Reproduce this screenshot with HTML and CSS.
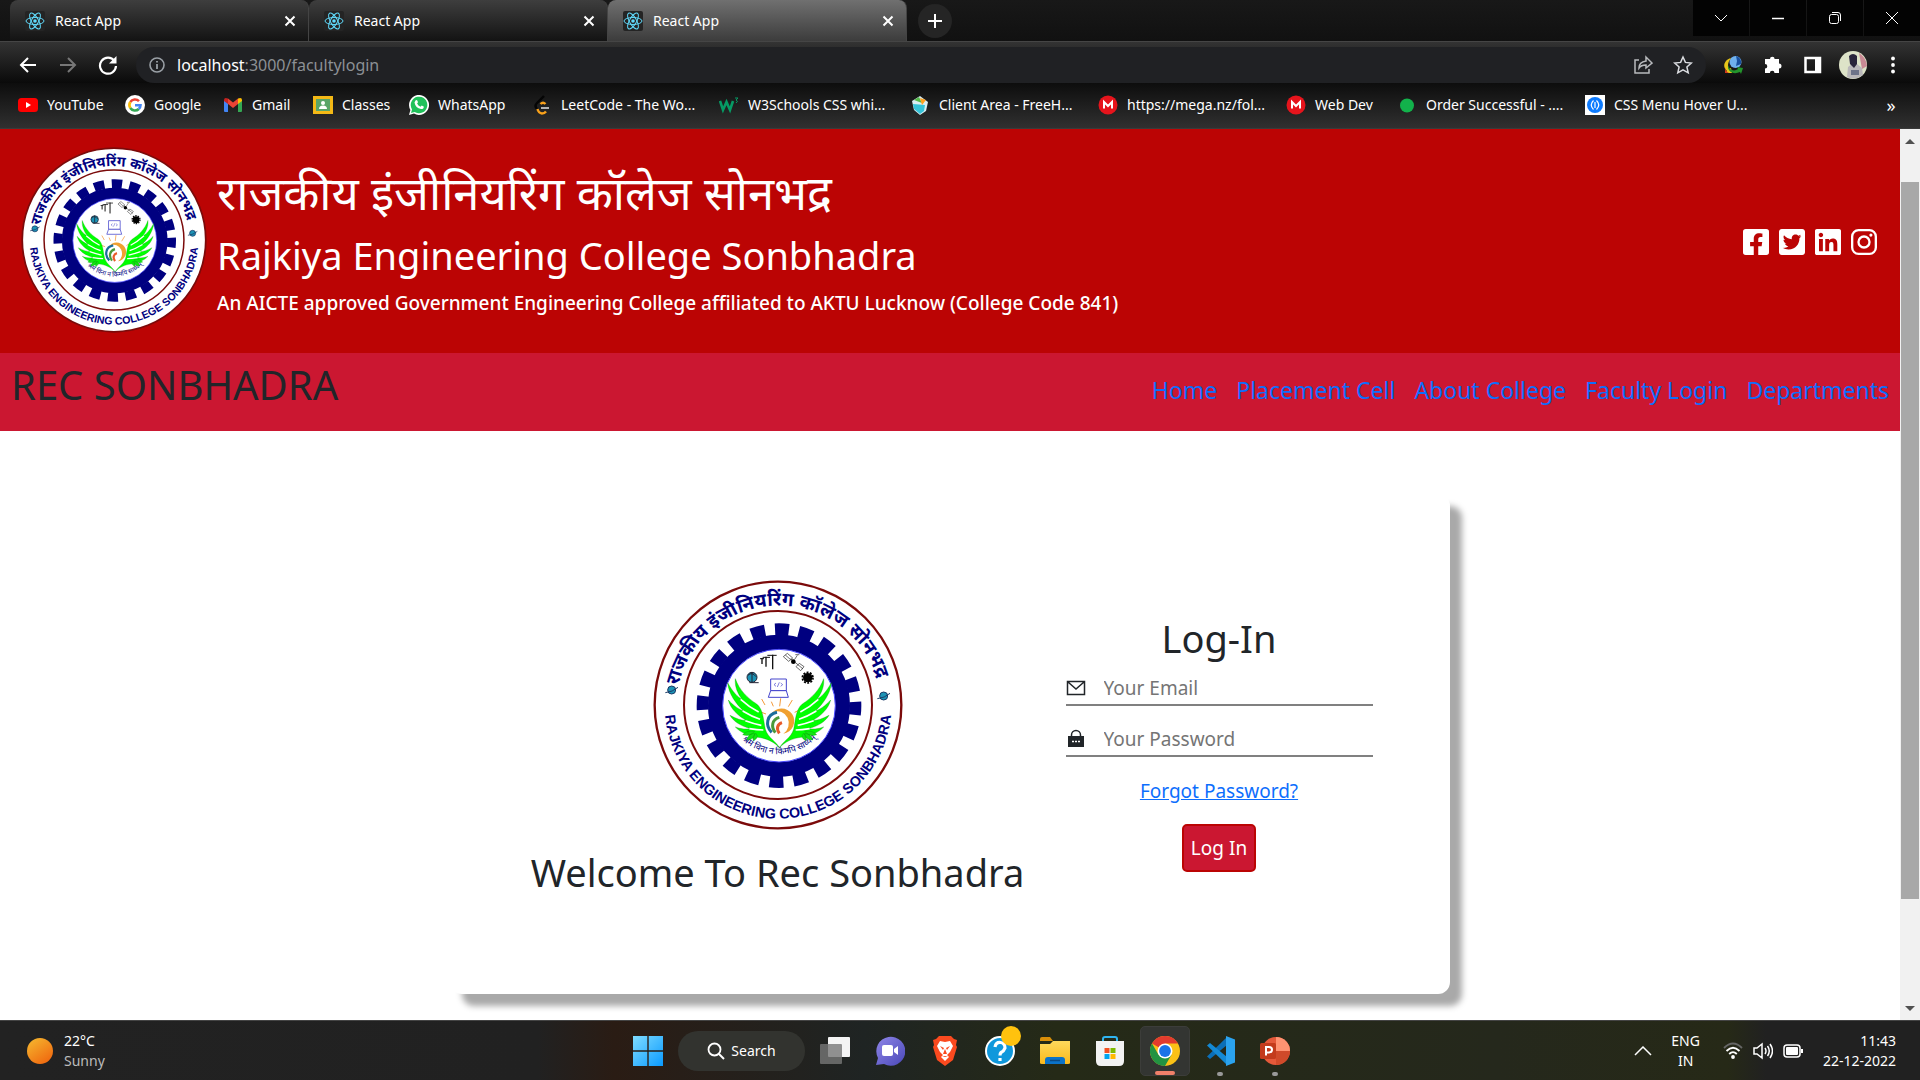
FILE: index.html
```html
<!DOCTYPE html>
<html lang="en">
<head>
<meta charset="utf-8">
<title>React App</title>
<link rel="stylesheet" href="styles.css">
</head>
<body>
<svg class="defs" aria-hidden="true">
  <defs>
    <path id="arc-top" d="M76 409a308 308 0 0 1 616 -20"/>
    <path id="arc-bottom" d="M45 345a340 340 0 1 0 674 0"/>
    <path id="arc-motto" d="M248 462a160 160 0 0 0 274 -6"/>
    <path id="wing" d="M386 517C372 500 345 488 322 486C292 482 268 470 254 455C272 462 290 462 300 460C270 452 248 438 238 420C256 430 274 436 288 436C260 420 240 400 233 374C250 392 264 402 280 408C256 386 234 356 231 322C246 350 262 366 274 372C258 350 252 330 254 310C266 344 290 368 318 386C338 402 338 434 344 462C352 488 376 498 386 517Z"/>
    <path id="feathers" d="M296 460Q320 464 338 464M284 436Q312 446 332 450M276 407Q304 424 328 432M270 372Q296 396 324 410"/>
    <symbol id="crest" viewBox="7 14 750 750">
      <circle cx="382" cy="389" r="370" fill="#fff" stroke="#7b0a0a" stroke-width="7"/>
      <circle cx="382" cy="389" r="282" fill="none" stroke="#7b0a0a" stroke-width="6"/>
      <circle cx="385" cy="391" r="190" fill="none" stroke="#000080" stroke-width="46"/>
      <circle cx="385" cy="391" r="229" fill="none" stroke="#000080" stroke-width="36" stroke-dasharray="42 29.95" stroke-dashoffset="14"/>
      <circle cx="385" cy="391" r="169" fill="#fff" stroke="#4a4aff" stroke-width="3"/>
      <text class="crest-hi"><textPath href="#arc-top" startOffset="50%">राजकीय इंजीनियरिंग कॉलेज सोनभद्र</textPath></text>
      <text class="crest-en"><textPath href="#arc-bottom" startOffset="50%">RAJKIYA ENGINEERING COLLEGE SONBHADRA</textPath></text>
      <text class="crest-motto"><textPath href="#arc-motto" startOffset="50%">श्रमं विना न किमपि साध्यम्</textPath></text>
      <g fill="#1c93b5" stroke="#1b3a66" stroke-width="3"><circle cx="63" cy="344" r="12"/><path d="M44 352Q66 350 82 336" fill="none"/><circle cx="699" cy="362" r="12"/><path d="M680 370Q702 368 718 354" fill="none"/></g>
      <g fill="none" stroke="#111" stroke-width="4"><path d="M366 238v44M346 244v30M334 248v18" /><path d="M350 240h28M336 246h22M328 250h12" stroke-width="3"/></g>
      <g fill="none" stroke="#222" stroke-width="2"><path d="M398 244l12-10 16 14-12 10zM436 274l10-10 14 10-10 12zM420 250l24 20M440 240l-8 12M434 238h12M404 239l16 14M443 269l14 12"/></g><circle cx="428" cy="259" r="7"/>
      <circle cx="471" cy="307" r="14"/><circle cx="471" cy="307" r="16" fill="none" stroke="#000" stroke-width="5" stroke-dasharray="6 4"/>
      <circle cx="304" cy="306" r="15" fill="#1c93b5" stroke="#223" stroke-width="3"/><path d="M292 300q12-12 24 4M304 290v30M296 322h28" fill="none" stroke="#223" stroke-width="3"/>
      <g fill="#fff" stroke="#4444cc" stroke-width="3"><path d="M360 311h47v35h-47z"/><path d="M360 346h47l6 20h-60z"/><path d="M376 323l-6 5 6 5M390 323l6 5-6 5M386 321l-6 14" fill="none" stroke-width="2"/></g>
      <g fill="none" stroke="#f49a3a" stroke-width="3"><path d="M333 371l10 18M362 379l6 14M390 369l-3 24M425 374l-12 20M330 410l16 6M432 411l16-8"/></g>
      <circle cx="392" cy="440" r="37" fill="#fff"/>
      <path d="M360 418a38 38 0 1 1 38 57a33 36 0 0 0-30-64z" fill="#f0a030"/>
      <g fill="none" stroke-width="9"><path d="M379 411c-32 6-36 40-16 60" stroke="#1b6c9c"/><path d="M386 426c-22 6-26 28-12 46" stroke="#4a9a3a"/><path d="M394 442c-14 4-18 18-8 32" stroke="#e85a2a"/></g>
      <use href="#wing" fill="#0f0" stroke="#0a8a0a" stroke-width="1"/>
      <use href="#wing" fill="#0f0" stroke="#0a8a0a" stroke-width="1" transform="matrix(-1 0 0 1 773 0)"/>
      <use href="#feathers" fill="none" stroke="#fff" stroke-width="5"/>
      <use href="#feathers" fill="none" stroke="#fff" stroke-width="5" transform="matrix(-1 0 0 1 773 0)"/>
      <g fill="#12e612" stroke="#0a8a0a"><path d="M276 478q12-14 36-10q-16 18-36 10zM288 494q4-18 24-20q0 20-24 20zM308 496q-4-14 8-22q10 14-8 22zM498 478q-12-14-36-10q16 18 36 10zM486 494q-4-18-24-20q0 20 24 20zM466 496q4-14-8-22q-10 14 8 22z"/></g>
    </symbol>
    <symbol id="react" viewBox="0 0 20 20"><rect width="20" height="20" rx="2" fill="#242424"/><g fill="none" stroke="#61dafb"><ellipse cx="10" cy="10" rx="9" ry="3.5"/><ellipse cx="10" cy="10" rx="9" ry="3.5" transform="rotate(60 10 10)"/><ellipse cx="10" cy="10" rx="9" ry="3.5" transform="rotate(120 10 10)"/></g><circle cx="10" cy="10" r="1.8" fill="#61dafb"/></symbol>
    <symbol id="close" viewBox="0 0 12 12"><path d="M1.500 1.500l9 9M10.500 1.500l-9 9" stroke="#fff" stroke-width="2" fill="none"/></symbol>
    <symbol id="mega" viewBox="0 0 20 20"><circle cx="10" cy="10" r="9.500" fill="#e6141c"/><path d="M6 13.500V7l4 4 4-4v6.500" fill="none" stroke="#fff" stroke-width="2"/></symbol>
    <linearGradient id="sun" x1="0" y1="0" x2=".7" y2="1"><stop stop-color="#f5bb30"/><stop offset="1" stop-color="#f06a10"/></linearGradient>
    <linearGradient id="win" x1="0" y1="0" x2="1" y2="1"><stop stop-color="#7fdcff"/><stop offset="1" stop-color="#0a9aff"/></linearGradient>
    <linearGradient id="chat" x1="0" y1="0" x2="1" y2="1"><stop stop-color="#8f86e8"/><stop offset="1" stop-color="#4a48b8"/></linearGradient>
    <linearGradient id="fold" x1="0" y1="0" x2="0" y2="1"><stop stop-color="#ffd95c"/><stop offset="1" stop-color="#fbb91c"/></linearGradient>
  </defs>
</svg>

<div class="chrome">
  <div class="tabstrip">
    <div class="tab"><svg class="fav"><use href="#react"/></svg><span>React App</span><button class="plain" aria-label="Close tab"><svg class="x"><use href="#close"/></svg></button></div>
    <div class="tab"><svg class="fav"><use href="#react"/></svg><span>React App</span><button class="plain" aria-label="Close tab"><svg class="x"><use href="#close"/></svg></button></div>
    <div class="tab active"><svg class="fav"><use href="#react"/></svg><span>React App</span><button class="plain" aria-label="Close tab"><svg class="x"><use href="#close"/></svg></button></div>
    <button class="newtab" aria-label="New tab"><svg width="16" height="16" viewBox="0 0 16 16"><path d="M8 1v14M1 8h14" stroke="#fff" stroke-width="2"/></svg></button>
    <div class="wincontrols">
      <button aria-label="Search tabs"><svg viewBox="0 0 14 14"><path d="M1 4l6 6 6-6"/></svg></button>
      <button aria-label="Minimize"><svg viewBox="0 0 14 14"><path d="M1 7.500h12" stroke-width="1.500"/></svg></button>
      <button aria-label="Restore"><svg viewBox="0 0 14 14"><rect x="1.500" y="3.500" width="9" height="9" rx="2"/><path d="M4 1.500h6q2.500 0 2.500 2.500v6"/></svg></button>
      <button aria-label="Close"><svg viewBox="0 0 14 14"><path d="M1 1l12 12M13 1L1 13"/></svg></button>
    </div>
  </div>
  <div class="toolbar">
    <button class="tool" aria-label="Back"><svg viewBox="0 0 20 20"><path d="M18 10H3M10 3l-7 7 7 7" fill="none" stroke="#fff" stroke-width="2"/></svg></button>
    <button class="tool" aria-label="Forward"><svg viewBox="0 0 20 20"><path d="M2 10h15M10 3l7 7-7 7" fill="none" stroke="#777" stroke-width="2"/></svg></button>
    <button class="tool" aria-label="Reload"><svg viewBox="0 0 20 20"><path d="M16.500 6A8 8 0 1 0 18 11" fill="none" stroke="#fff" stroke-width="2.200"/><path d="M18.500 1v7.500H11z" fill="#fff"/></svg></button>
    <div class="omnibox">
      <svg width="16" height="16" viewBox="0 0 16 16"><circle cx="8" cy="8" r="7" fill="none" stroke="#9aa0a6" stroke-width="1.600"/><path d="M8 7v5M8 4v1.600" stroke="#9aa0a6" stroke-width="1.800"/></svg>
      <div class="url">localhost<span>:3000/facultylogin</span></div>
      <button class="tool" aria-label="Share"><svg viewBox="0 0 20 20"><path d="M6 5H2v13h14v-4M6 13q0-6 7-7V2l6 6-6 5v-3q-5 0-7 3z" fill="none" stroke="#b8babd" stroke-width="1.500"/></svg></button>
      <button class="tool" aria-label="Bookmark"><svg viewBox="0 0 20 20"><path d="M10 2l2.400 5.400 5.900.6-4.400 4 1.300 5.800L10 14.800l-5.200 3 1.300-5.800-4.400-4 5.900-.6z" fill="none" stroke="#dadce0" stroke-width="1.500"/></svg></button>
    </div>
    <button class="tool" aria-label="Download manager"><svg viewBox="0 0 20 20"><circle cx="12.500" cy="7" r="6" fill="#6fb0ee"/><path d="M13 1q6 2 5 8l-5 2 1-5z" fill="#184f9e"/><path d="M8 3C1 5-1 12 4 16l-2 2 7 0-1-5-2 1C4 11 5 7 8 3z" fill="#e6c619"/><path d="M5 10c1 5 6 7 10 4l-1-2 6 1-2 6-1-2C11 20 4 17 5 10z" fill="#23952b"/><path d="M2 12q0 4 4 6l-4 0z" fill="#d33a20"/></svg></button>
    <button class="tool" aria-label="Extensions"><svg viewBox="0 0 20 20"><path d="M7 4a2.300 2.300 0 0 1 4.600 0h4.400v4.500a2.500 2.500 0 0 1 0 5V18h-4.500a2.300 2.300 0 0 0-4.600 0H2v-4.500a2.300 2.300 0 0 0 0-4.600V4z" fill="#fff"/></svg></button>
    <button class="tool" aria-label="Side panel"><svg viewBox="0 0 20 20"><path d="M2.500 3h14.500v14H2.500z" fill="none" stroke="#fff" stroke-width="2.500"/><path d="M12 3h5v14h-5z" fill="#fff"/></svg></button>
    <button class="tool" aria-label="Profile"><svg class="avatar" viewBox="0 0 28 28"><circle cx="14" cy="14" r="14" fill="#dde3c8"/><path d="M20 2q7 4 8 13l-5 3z" fill="#c98a95"/><path d="M8 26l1-10 4-3h5l5 4 1 7q-8 6-16 2z" fill="#b9b7ba"/><path d="M10 5q4-4 8 0v8l-3 4-4-4z" fill="#28243a"/><path d="M12 19h8v5h-8z" fill="#6d7389"/></svg></button>
    <button class="tool" aria-label="Menu"><svg viewBox="0 0 20 20" fill="#fff"><circle cx="10" cy="3.500" r="1.900"/><circle cx="10" cy="10" r="1.900"/><circle cx="10" cy="16.500" r="1.900"/></svg></button>
  </div>
  <nav class="bookmarks" aria-label="Bookmarks">
    <a href="#"><svg viewBox="0 0 20 20"><rect y="3" width="20" height="14" rx="3.500" fill="#f00"/><path d="M8 7l5 3-5 3z" fill="#fff"/></svg>YouTube</a>
    <a href="#"><svg viewBox="0 0 20 20"><circle cx="10" cy="10" r="10" fill="#fff"/><g fill="none" stroke-width="2.600"><path d="M5.300 7A5.600 5.600 0 0 1 14 6.200" stroke="#ea4335"/><path d="M5.300 13a5.600 5.600 0 0 1 0-6" stroke="#fbbc05"/><path d="M5.300 13a5.600 5.600 0 0 0 8.500 1" stroke="#34a853"/><path d="M13.800 14a5.600 5.600 0 0 0 1.700-3.800H10" stroke="#4285f4"/></g></svg>Google</a>
    <a href="#"><svg viewBox="0 0 20 20"><path d="M1 5l4 3v9H2q-1 0-1-1z" fill="#4285f4"/><path d="M19 5l-4 3v9h3q1 0 1-1z" fill="#34a853"/><path d="M5 3.500l5 4 5-4V9l-5 4-5-4z" fill="#ea4335"/><path d="M1 5q0-3 4-1.500V9L1 6z" fill="#c5221f"/><path d="M19 5q0-3-4-1.500V9l4-3z" fill="#fbbc04"/></svg>Gmail</a>
    <a href="#"><svg viewBox="0 0 20 20"><path d="M0 1h20v18H0z" fill="#f4b916"/><path d="M3 4h14v12H3z" fill="#5aa568"/><circle cx="10" cy="8" r="2" fill="#fff"/><path d="M6 14q0-3.500 4-3.500t4 3.500z" fill="#fff"/></svg>Classes</a>
    <a href="#"><svg viewBox="0 0 20 20"><path d="M0 20l1.400-5A10 10 0 1 1 5 18.600z" fill="#fff"/><path d="M2 18l1-3.600A8.300 8.300 0 1 1 5.600 17z" fill="#20c15a"/><path d="M6.500 5.500q1-1 1.800 0l.7 1.800-.9 1.200q1 2.300 3.400 3.200l1.200-1.300 2 1q.4 2.600-2.700 2.700Q6.500 13 5.500 7.500z" fill="#fff"/></svg>WhatsApp</a>
    <a href="#"><svg viewBox="0 0 20 20"><path d="M12 1L5 8q-3 3 0 6" fill="none" stroke="#050505" stroke-width="2.400"/><path d="M13.500 9q-2.500-2.500-5 0M5.500 14q1 4 4.500 4.500 2.500 0 4-2" fill="none" stroke="#f8a11b" stroke-width="2.400"/><path d="M9 13h8" stroke="#b3b3b3" stroke-width="2"/></svg>LeetCode - The Wo...</a>
    <a href="#"><svg viewBox="0 0 20 20"><path d="M1 6l3 9 3.500-8 3.500 8 3-9" fill="none" stroke="#069a64" stroke-width="2.600"/><path d="M16 3h3l-2 2q3 1 0 3" fill="none" stroke="#069a64"/></svg>W3Schools CSS whi...</a>
    <a href="#"><svg viewBox="0 0 20 20"><path d="M2 6l8-5 8 6-2 9-6 4-6-5z" fill="#d9eef2"/><path d="M3 9l12 1-1 6-4 3-6-5z" fill="#35c3d8"/><path d="M4 5l5-3 3 6z" fill="#55b94a"/><path d="M10 3l6 2-4 5z" fill="#ff9f1c"/></svg>Client Area - FreeH...</a>
    <a href="#"><svg><use href="#mega"/></svg>https://mega.nz/fol...</a>
    <a href="#"><svg><use href="#mega"/></svg>Web Dev</a>
    <a href="#"><svg viewBox="0 0 20 20"><circle cx="10" cy="10.500" r="7" fill="#12b24b"/></svg>Order Successful - ....</a>
    <a href="#"><svg viewBox="0 0 20 20"><path d="M0 0h20v20H0z" fill="#fff"/><circle cx="10" cy="10" r="8" fill="#0d7bff"/><path d="M8.500 5.500Q4 10 8.500 14.500M11.500 5.500q4.500 4.500 0 9M10 7v6" fill="none" stroke="#fff" stroke-width="1.200"/></svg>CSS Menu Hover U...</a>
    <button class="plain more" aria-label="More bookmarks">»</button>
  </nav>
</div>

<div class="viewport">
  <div class="page">
    <header class="banner">
      <svg class="banner-logo" role="img" aria-label="College crest"><use href="#crest"/></svg>
      <div class="banner-text">
        <p class="title-hi" lang="hi">राजकीय इंजीनियरिंग कॉलेज सोनभद्र</p>
        <h1 class="title-en">Rajkiya Engineering College Sonbhadra</h1>
        <p class="subtitle">An AICTE approved Government Engineering College affiliated to AKTU Lucknow (College Code 841)</p>
      </div>
      <div class="social">
        <a href="#" aria-label="Facebook"><svg viewBox="0 0 448 512"><path d="M400 32H48A48 48 0 0 0 0 80v352a48 48 0 0 0 48 48h137.250V327.690h-63V256h63v-54.640c0-62.150 37-96.480 93.670-96.480 27.140 0 55.520 4.840 55.520 4.840v61h-31.270c-30.810 0-40.420 19.120-40.420 38.730V256h68.780l-11 71.690h-57.780V480H400a48 48 0 0 0 48-48V80a48 48 0 0 0-48-48z"/></svg></a>
        <a href="#" aria-label="Twitter"><svg viewBox="0 0 448 512"><path d="M400 32H48C21.500 32 0 53.500 0 80v352c0 26.500 21.500 48 48 48h352c26.500 0 48-21.500 48-48V80c0-26.500-21.500-48-48-48zm-48.900 158.800c.2 2.800.2 5.700.2 8.500 0 86.700-66 186.600-186.600 186.600-37.200 0-71.700-10.800-100.700-29.400 5.300.6 10.400.8 15.800.8 30.700 0 58.900-10.400 81.400-28-28.800-.6-53-19.500-61.300-45.500 10.100 1.500 19.200 1.500 29.600-1.200-30-6.100-52.500-32.500-52.500-64.400v-.8c8.700 4.900 18.900 7.900 29.600 8.300a65.447 65.447 0 0 1-29.200-54.600c0-12.200 3.200-23.400 8.900-33.100 32.300 39.800 80.800 65.800 135.200 68.600-9.300-44.500 24-80.600 64-80.600 18.900 0 35.900 7.900 47.900 20.700 14.800-2.800 29-8.300 41.600-15.800-4.900 15.200-15.200 28-28.800 36.100 13.200-1.400 26-5.100 37.800-10.200-8.900 13.100-20.100 24.700-32.900 34z"/></svg></a>
        <a href="#" aria-label="LinkedIn"><svg viewBox="0 0 448 512"><path d="M416 32H31.900C14.300 32 0 46.500 0 64.300v383.400C0 465.500 14.300 480 31.900 480H416c17.600 0 32-14.500 32-32.300V64.300c0-17.800-14.400-32.300-32-32.300zM135.400 416H69V202.200h66.500V416zm-33.200-243c-21.300 0-38.500-17.300-38.500-38.500S80.900 96 102.200 96c21.200 0 38.500 17.300 38.500 38.500 0 21.300-17.200 38.500-38.500 38.500zm282.100 243h-66.400V312c0-24.800-.5-56.700-34.500-56.700-34.600 0-39.900 27-39.900 54.900V416h-66.400V202.200h63.700v29.200h.9c8.900-16.800 30.600-34.500 62.900-34.500 67.200 0 79.700 44.300 79.700 101.900V416z"/></svg></a>
        <a href="#" aria-label="Instagram"><svg viewBox="0 0 448 512"><g fill="none" stroke="#fff" stroke-width="40"><rect x="20" y="52" width="408" height="408" rx="110"/><circle cx="224" cy="256" r="95"/></g><circle cx="343" cy="137" r="27"/></svg></a>
      </div>
    </header>
    <nav class="sitenav">
      <div class="brand">REC SONBHADRA</div>
      <ul>
        <li><a href="#">Home</a></li>
        <li><a href="#">Placement Cell</a></li>
        <li><a href="#">About College</a></li>
        <li><a href="#">Faculty Login</a></li>
        <li><a href="#">Departments</a></li>
      </ul>
    </nav>
    <main class="login">
      <section class="card">
        <div class="welcome">
          <svg class="card-logo" role="img" aria-label="College crest"><use href="#crest"/></svg>
          <h2>Welcome To Rec Sonbhadra</h2>
        </div>
        <form class="form">
          <h2>Log-In</h2>
          <div class="field">
            <label for="email" aria-label="Email"><svg viewBox="0 0 20 20"><path d="M1.500 3.500h17v13h-17zM2 4l8 7 8-7" fill="none" stroke="#212529" stroke-width="1.500"/></svg></label>
            <input id="email" type="email" placeholder="Your Email">
          </div>
          <div class="field">
            <label for="password" aria-label="Password"><svg viewBox="0 0 20 20"><path d="M5.500 8V6a4.500 4.500 0 0 1 9 0v2" fill="none" stroke="#212529" stroke-width="1.500"/><path d="M2 7h16v11H2z" fill="#212529"/><path d="M6 12.500h2M9 12.500h2M12 12.500h2" stroke="#fff" stroke-width="1.500"/></svg></label>
            <input id="password" type="password" placeholder="Your Password">
          </div>
          <a class="forgot" href="#">Forgot Password?</a>
          <button class="submit" type="button">Log In</button>
        </form>
      </section>
    </main>
  </div>
  <div class="scrollbar" aria-hidden="true">
    <svg width="10" height="6" viewBox="0 0 10 6"><path d="M0 6l5-5 5 5z" fill="#505050"/></svg>
    <div class="track"><div class="thumb"></div></div>
    <svg width="10" height="6" viewBox="0 0 10 6"><path d="M0 0l5 5 5-5z" fill="#505050"/></svg>
  </div>
</div>

<footer class="taskbar">
  <div class="weather">
    <svg width="26" height="26" viewBox="0 0 26 26"><circle cx="13" cy="13" r="13" fill="url(#sun)"/></svg>
    <div>22°C<br><span>Sunny</span></div>
  </div>
  <div class="apps">
    <button class="app" aria-label="Start"><svg viewBox="0 0 30 30" fill="url(#win)"><path d="M0 0h14.300v14.300H0zM15.700 0H30v14.300H15.700zM0 15.700h14.300V30H0zM15.700 15.700H30V30H15.700z"/></svg></button>
    <button class="search"><svg width="18" height="18" viewBox="0 0 18 18"><circle cx="7.500" cy="7.500" r="6" fill="none" stroke="#fff" stroke-width="1.800"/><path d="M12 12l5 5" stroke="#fff" stroke-width="2"/></svg>Search</button>
    <button class="app" aria-label="Task view"><svg viewBox="0 0 30 30"><rect x="8" y="1" width="22" height="20" rx="1" fill="#f4f4f4"/><rect y="8" width="22" height="20" rx="1" fill="#777" fill-opacity=".8"/></svg></button>
    <button class="app" aria-label="Chat"><svg viewBox="0 0 30 30"><path d="M1 29L3 22A14.500 14.500 0 1 1 9 28z" fill="url(#chat)"/><rect x="7" y="9" width="11" height="11" rx="2" fill="#fff"/><path d="M19 13l4-3v9l-4-3z" fill="#fff"/></svg></button>
    <button class="app" aria-label="Brave"><svg viewBox="0 0 30 30"><path d="M9 0h12l3 3 3 1-1 5 1 2-4 13-8 6-8-6-4-13 1-2-1-5 3-1z" fill="#fb4a1f"/><path d="M10 5l5 1 5-1 3 5-3 6-3 3 2 2-4 4-4-4 2-2-3-3-3-6z" fill="#fff"/><path d="M10 10l4 2-1 2zM20 10l-4 2 1 2zM15 13l2 5h-4zM12 20h6l-3 1z" fill="#fb4a1f"/></svg></button>
    <button class="app" aria-label="Get help"><svg viewBox="0 0 30 30"><circle cx="15" cy="15" r="14" fill="#0f98dc" stroke="#fff" stroke-width="2"/><path d="M10 11q1-5 5.500-4.500T20 12q-1 3-4 4.500-1 1-1 3M15 22v3" fill="none" stroke="#fff" stroke-width="3.200"/></svg><span class="badge"></span></button>
    <button class="app" aria-label="File Explorer"><svg viewBox="0 0 30 30"><path d="M0 3q0-2 2-2h8l3 4H0z" fill="#d98f09"/><path d="M0 8h10l3-3h17v22q0 1-2 1H2q-2 0-2-1z" fill="url(#fold)"/><path d="M5 28v-4q0-3 3-3h14q3 0 3 3v4z" fill="#0b73c9"/><path d="M10 24.500h10" stroke="#0a4a85" stroke-width="1.500"/></svg></button>
    <button class="app" aria-label="Microsoft Store"><svg viewBox="0 0 30 30"><path d="M8 6V3q0-2 2-2h10q2 0 2 2v3" fill="none" stroke="#2fb4f0" stroke-width="2"/><path d="M1 5h28v20q0 5-5 5H6q-5 0-5-5z" fill="#f3f3f3"/><path d="M9.500 12h5v5h-5z" fill="#f25022"/><path d="M15.500 12h5v5h-5z" fill="#7fba00"/><path d="M9.500 18h5v5h-5z" fill="#00a4ef"/><path d="M15.500 18h5v5h-5z" fill="#ffb900"/></svg></button>
    <button class="app current" aria-label="Chrome"><svg viewBox="0 0 30 30"><circle cx="15" cy="15" r="15" fill="#fbc116"/><path d="M15 15L2 7.500A15 15 0 0 1 28 7.500H15z" fill="#e33b2e"/><path d="M2 7.500A15 15 0 0 0 15 30l6.500-11.200L15 15 8.500 18.700z" fill="#229342"/><circle cx="15" cy="15" r="7.500" fill="#fff"/><circle cx="15" cy="15" r="5.900" fill="#1a73e8"/></svg></button>
    <button class="app open" aria-label="Visual Studio Code"><svg viewBox="0 0 30 30"><path d="M2 20.500L22 1v8L5 23z" fill="#0b6fb8"/><path d="M2 9.500L22 29v-8L5 7z" fill="#1489d4"/><path d="M21 0l9 3.500v23L21 30z" fill="#2ba3ef"/></svg></button>
    <button class="app open" aria-label="PowerPoint"><svg viewBox="0 0 30 30"><circle cx="16" cy="15" r="14" fill="#e4593a"/><path d="M16 1a14 14 0 0 1 14 14H16z" fill="#ff9372"/><path d="M16 29a14 14 0 0 0 14-14H16z" fill="#d04a2a"/><rect y="7" width="16" height="16" rx="1.500" fill="#c33b1c"/><path d="M6 19.500V11h3q3 .2 3 2.700t-3 2.700H6" fill="none" stroke="#fff" stroke-width="2"/></svg></button>
  </div>
  <div class="tray">
    <svg width="18" height="10" viewBox="0 0 18 10"><path d="M1 9l8-8 8 8" fill="none" stroke="#fff" stroke-width="1.500"/></svg>
    <div class="lang">ENG<br>IN</div>
    <div class="status">
      <svg width="20" height="18" viewBox="0 0 20 18" fill="none" stroke="#fff" stroke-width="1.800"><path d="M1 6q9-9 18 0" stroke="#666"/><path d="M3.500 9q6.500-6.500 13 0M6.200 12q3.800-3.800 7.600 0"/><circle cx="10" cy="15" r="1" fill="#fff"/></svg>
      <svg width="20" height="18" viewBox="0 0 20 18" fill="none" stroke="#fff" stroke-width="1.500"><path d="M1 6h3l5-4v14l-5-4H1zM12 6q2 3 0 6M14.500 4q3.500 5 0 10M17 2q5 7 0 14"/></svg>
      <svg width="20" height="14" viewBox="0 0 20 14"><rect x="1" y="1" width="16" height="12" rx="3" fill="none" stroke="#fff" stroke-width="1.500"/><rect x="3" y="3" width="12" height="8" rx="1" fill="#fff"/><path d="M18 5h2v4h-2z" fill="#fff"/></svg>
    </div>
    <div class="clock">11:43<br>22-12-2022</div>
  </div>
</footer>
</body>
</html>
```
FILE: styles.css
```css
* { box-sizing: border-box; }
body {
  margin: 0;
  height: 100vh;
  display: flex;
  flex-direction: column;
  overflow: hidden;
  font-family: "Noto Sans", "Open Sans", sans-serif;
  font-size: 18px;
  color: #212529;
  background: #fff;
}
h1, h2, p, ul { margin: 0; padding: 0; font-weight: 400; }
button { border: 0; margin: 0; padding: 0; background: none; color: inherit; font: inherit; }
svg { display: block; flex: none; }
.defs { position: absolute; width: 0; height: 0; }

/* crest lettering */
.crest-hi, .crest-en, .crest-motto { text-anchor: middle; fill: #000080; }
.crest-hi { font: 700 57px "Noto Sans", sans-serif; }
.crest-en { font: 700 43px "Liberation Sans", sans-serif; }
.crest-motto { font: 400 26px "Noto Sans", sans-serif; }

/* browser window */
.chrome {
  color: #fff;
  font-family: "Noto Sans", sans-serif;
  font-size: 14px;
  background: #111;
  border-bottom: 1px solid #3a3a3a;
}
.tabstrip {
  display: flex;
  align-items: flex-start;
  padding-left: 10px;
  background: linear-gradient(#181818, #111);
  border-bottom: 1px solid #454545;
}
.tab {
  width: 299px;
  height: 41px;
  display: flex;
  align-items: center;
  gap: 10px;
  padding: 0 12px 0 15px;
  border-right: 1px solid #444;
  border-radius: 8px 8px 0 0;
  background: linear-gradient(#3e3e3e, #131313);
}
.tab span { flex: 1; }
.tab.active { background: linear-gradient(#707070, #3c3c3c); }
.fav { width: 20px; height: 20px; }
.x { width: 12px; height: 12px; }
.newtab {
  width: 34px;
  height: 34px;
  margin: 4px 0 0 11px;
  border-radius: 50%;
  background: #252525;
  display: grid;
  place-items: center;
}
.wincontrols { display: flex; margin-left: auto; gap: 1px; }
.wincontrols button { width: 56px; height: 36px; display: grid; place-items: center; background: #030303; }
.wincontrols svg { width: 14px; height: 14px; fill: none; stroke: #fff; }
.toolbar {
  display: flex;
  align-items: center;
  padding: 5px 7px 0 8px;
  background: linear-gradient(#333, #0a0a0a);
}
.tool { width: 40px; height: 36px; display: grid; place-items: center; flex: none; }
.tool svg { width: 20px; height: 20px; }
.tool .avatar { width: 28px; height: 28px; }
.omnibox {
  flex: 1;
  display: flex;
  align-items: center;
  gap: 12px;
  margin: 0 7px 0 8px;
  padding: 0 3px 0 13px;
  border-radius: 18px;
  background: #202124;
}
.omnibox .tool + .tool { margin-left: -12px; }
.url { flex: 1; font-size: 16px; color: #fff; }
.url span { color: #8c9095; }
.bookmarks {
  display: grid;
  grid-template-columns: 107px 98px 90px 96px 123px 187px 191px 188px 188px 111px 188px 1fr 30px;
  align-items: center;
  height: 45px;
  padding: 0 14px 2px 18px;
  background: linear-gradient(#0d0d0d, #303030);
}
.bookmarks a {
  display: flex;
  align-items: center;
  gap: 9px;
  color: #fff;
  text-decoration: none;
  white-space: nowrap;
}
.bookmarks svg { width: 20px; height: 20px; }
.more { font-size: 18px; }

/* web page */
.viewport { flex: 1; min-height: 0; display: flex; }
.page { flex: 1; display: flex; flex-direction: column; }
.banner {
  display: flex;
  align-items: center;
  gap: 10px;
  padding: 18px 23px 20px 21px;
  background: #bb0404;
  color: #fff;
}
.banner-logo { width: 186px; height: 186px; }
.banner-text { flex: 1; }
.title-hi { font-size: 47px; line-height: 66px; }
.title-en { font-size: 38px; line-height: 60px; }
.subtitle { font-size: 19px; line-height: 36px; font-weight: 500; }
.social { display: flex; gap: 10px; padding-top: 4px; }
.social svg { width: 26px; height: 30px; fill: #fff; }
.sitenav {
  display: flex;
  align-items: center;
  justify-content: space-between;
  padding: 4px 11px 18px;
  background: #cb1731;
}
.brand { font-size: 40px; line-height: 56px; }
.sitenav ul { display: flex; gap: 19px; list-style: none; padding-top: 10px; }
.sitenav a { font-size: 23px; color: #0d6efd; text-decoration: none; }
.login { flex: 1; display: flex; justify-content: center; align-items: flex-start; padding-top: 63px; }
.card {
  width: 1000px;
  display: flex;
  justify-content: center;
  align-items: center;
  gap: 38px;
  padding: 86px 0 98px;
  border-radius: 12px;
  background: #fff;
  box-shadow: 12px 12px 6px #a9a9a9;
}
.welcome { width: 500px; display: flex; flex-direction: column; align-items: center; white-space: nowrap; }
.card-logo { width: 250px; height: 250px; }
.welcome h2, .form h2 { font-size: 38px; line-height: 48px; }
.welcome h2 { margin-top: 18px; }
.form { width: 307px; display: flex; flex-direction: column; align-items: center; padding-top: 10px; }
.form h2 { margin-bottom: 9px; }
.field {
  align-self: stretch;
  display: flex;
  align-items: center;
  gap: 18px;
  height: 35px;
  margin-bottom: 16px;
  border-bottom: 2px solid #808080;
}
.field svg { width: 20px; height: 20px; }
.field input { flex: 1; min-width: 0; border: 0; padding: 0; background: none; font: 19px "Noto Sans", sans-serif; color: #212529; }
.field input::placeholder { color: #757575; opacity: 1; }
.forgot { font-size: 19px; line-height: 36px; color: #0d6efd; }
.submit {
  margin-top: 15px;
  width: 74px;
  height: 48px;
  border: 2px solid #bb0404;
  border-radius: 5px;
  background: #cb1731;
  color: #fff;
  font-size: 19px;
}
.scrollbar {
  width: 20px;
  display: flex;
  flex-direction: column;
  align-items: center;
  padding: 9px 0 8px;
  background: #f1f1f1;
}
.track { flex: 1; align-self: stretch; padding: 38px 1px 0; }
.thumb { height: 87%; background: #a8a8a8; }

/* taskbar */
.taskbar {
  display: grid;
  grid-template-columns: 1fr auto 1fr;
  align-items: center;
  height: 60px;
  padding: 0 24px 0 27px;
  border-top: 1px solid #444;
  background: linear-gradient(90deg, #222, #212121 28%, #2a1c14 32%, #1f2423 45%, #252a17 55%, #25281c 78%, #262917 90%, #212121 92%);
  color: #fff;
  font-family: "Noto Sans", sans-serif;
  font-size: 14px;
  line-height: 20px;
}
.weather { display: flex; align-items: center; gap: 11px; }
.weather span { color: #bbb; }
.apps { display: flex; align-items: center; gap: 5px; }
.app { position: relative; width: 50px; height: 50px; display: grid; place-items: center; border-radius: 5px; }
.app svg { width: 30px; height: 30px; }
.app.current { background: #333532; border: 1px solid #3c3d3a; }
.app.current::after, .app.open::after {
  content: "";
  position: absolute;
  bottom: 0;
  width: 6px;
  height: 4px;
  border-radius: 2px;
  background: #999;
}
.app.current::after { width: 20px; background: #f0806a; }
.badge { position: absolute; top: 0; right: 4px; width: 20px; height: 20px; border-radius: 50%; background: #ffc20e; }
.search {
  width: 127px;
  height: 40px;
  border-radius: 20px;
  background: #32332f;
  display: flex;
  align-items: center;
  justify-content: center;
  gap: 6px;
}
.tray { display: flex; align-items: center; justify-content: flex-end; }
.lang { margin-left: 19px; text-align: center; }
.status { display: flex; align-items: center; gap: 10px; margin: 0 20px 0 23px; }
.clock { text-align: right; }
```
